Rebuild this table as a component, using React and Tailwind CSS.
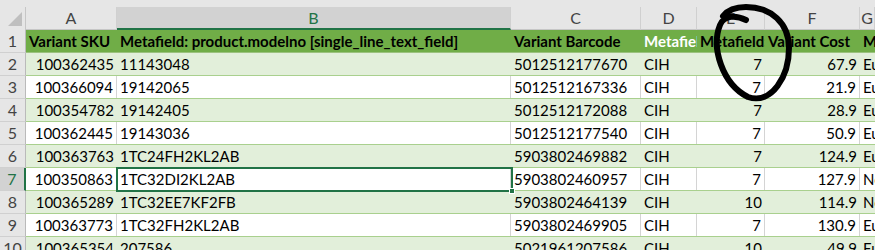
import React from 'react'

const rows = [
  ['100362435', '11143048', '5012512177670', 'CIH', '7', '67.9', 'Eu'],
  ['100366094', '19142065', '5012512167336', 'CIH', '7', '21.9', 'Eu'],
  ['100354782', '19142405', '5012512172088', 'CIH', '7', '28.9', 'Eu'],
  ['100362445', '19143036', '5012512177540', 'CIH', '7', '50.9', 'Eu'],
  ['100363763', '1TC24FH2KL2AB', '5903802469882', 'CIH', '7', '124.9', 'Eu'],
  ['100350863', '1TC32DI2KL2AB', '5903802460957', 'CIH', '7', '127.9', 'No'],
  ['100365289', '1TC32EE7KF2FB', '5903802464139', 'CIH', '10', '114.9', 'No'],
  ['100363773', '1TC32FH2KL2AB', '5903802469905', 'CIH', '7', '130.9', 'Eu'],
  ['100365354', '207586', '5021961207586', 'CIH', '10', '49.9', 'Eu'],
]

const widths = ['w-[91px]', 'w-[394px]', 'w-[130px]', 'w-[56px]', 'w-[68px]', 'w-[95px]', 'flex-1']
const aligns = ['justify-end', 'justify-start', 'justify-start', 'justify-start', 'justify-end', 'justify-end', 'justify-start']
const letters = ['A', 'B', 'C', 'D', 'E', 'F', 'G']

export default function App() {
  return (
    <div className="relative w-[875px] h-[250px] overflow-hidden bg-white font-['Lato','Liberation_Sans',sans-serif] text-[15px] text-black">
      {/* column letters */}
      <div className="h-[7px] bg-[#e6e6e6]" />
      <div className="flex h-[23px] bg-[#e6e6e6] text-[#444] text-[16px]">
        <div className="w-[26px] shrink-0 border-r border-[#c6c6c6] relative">
          <div className="absolute left-[8px] top-[5px] w-0 h-0 border-l-[14px] border-l-transparent border-b-[14px] border-b-[#bfbfbf]" />
        </div>
        {letters.map((l, i) => (
          <div key={l}
            className={`${widths[i]} shrink-0 flex items-center justify-center border-r border-[#d0d0d0] ${i === 1 ? 'bg-[#d2d2d2] text-[#217346] border-b-2 border-b-[#217346]' : 'border-b border-b-[#c6c6c6]'}`}>
            {l}
          </div>
        ))}
      </div>

      {/* header row 1 */}
      <div className="flex h-[23px]">
        <div className="w-[26px] shrink-0 flex items-center justify-center bg-[#e6e6e6] text-[#444] text-[16px] border-r border-r-[#bababa] border-b border-b-[#d0d0d0]">1</div>
        <div className="flex flex-1 bg-[#70ad47] font-bold border-b border-b-[#9bc27e]">
          <Head w={widths[0]} text="Variant SKU" />
          <Head w={widths[1]} text="Metafield: product.modelno [single_line_text_field]" />
          <Head w={widths[2]} text="Variant Barcode" />
          <Head w={widths[3]} text="Metafield: product.brand" white />
          <Head w={widths[4]} text="Metafield: product.warranty" />
          <Head w={widths[5]} text="Variant Cost" />
          <Head w={widths[6]} text="Metafield" />
        </div>
      </div>

      {rows.map((r, ri) => {
        const green = ri % 2 === 0
        const selected = ri === 5
        return (
          <div key={ri} className="flex h-[23px]">
            <div className={`w-[26px] shrink-0 flex items-center justify-center text-[16px] border-b border-b-[#d0d0d0] ${selected ? 'bg-[#d2d2d2] text-[#217346] border-r-2 border-r-[#217346]' : 'bg-[#e6e6e6] text-[#444] border-r border-r-[#bababa]'}`}>
              {ri + 2}
            </div>
            <div className={`flex flex-1 border-b border-b-[#a9d08e] ${green ? 'bg-[#e2efda]' : 'bg-white'}`}>
              {r.map((v, ci) => (
                <div key={ci}
                  className={`${widths[ci]} shrink-0 relative flex items-center px-[3px] whitespace-nowrap overflow-hidden ${aligns[ci]} ${green ? '' : 'border-r border-r-[#d4d4d4]'}`}>
                  {v}
                </div>
              ))}
            </div>
          </div>
        )
      })}

      {/* selected cell B7 */}
      <div className="absolute left-[116px] top-[167px] w-[397px] h-[25px] border-2 border-[#217346] pointer-events-none">
        <div className="absolute -right-[4px] -bottom-[4px] w-[6px] h-[6px] bg-[#217346] border border-white" />
      </div>

      {/* hand-drawn circle */}
      <svg className="absolute left-0 top-0 pointer-events-none" width="875" height="250">
        <path
          d="M 746 20 C 736 15, 724 15, 720 25 C 711 47, 722 84, 748 97 C 772 105, 789 76, 789 48 C 789 23, 771 7, 746 7 C 735 7, 727 11, 723 16"
          fill="none" stroke="black" strokeWidth="6" strokeLinecap="round" strokeLinejoin="round" />
      </svg>
    </div>
  )
}

function Head({ w, text, white }) {
  return (
    <div className={`${w} shrink-0 flex items-center px-[3px] overflow-hidden whitespace-nowrap ${white ? 'text-white' : 'text-black'}`}>
      {text}
    </div>
  )
}
